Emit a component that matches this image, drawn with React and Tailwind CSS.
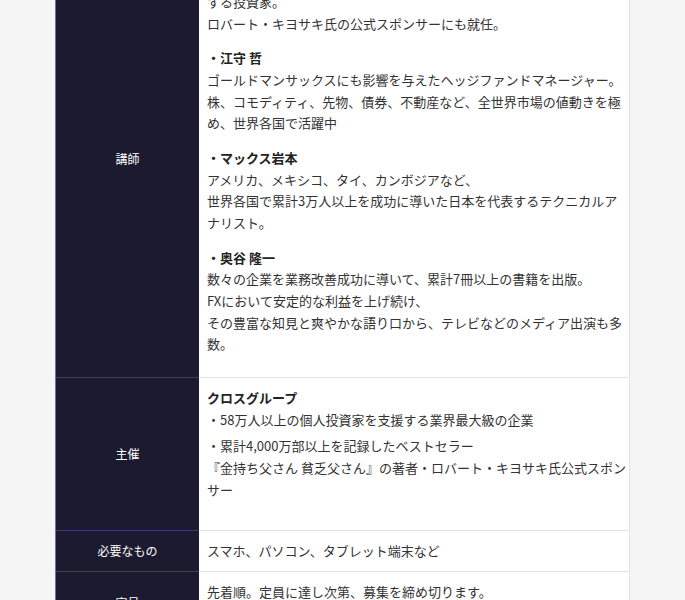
import React from 'react';

const Row = ({ label, children, bodyClass = '' }) => (
  <div className="flex">
    <div className="w-[143px] shrink-0 bg-[#1b1a2e] border-b border-[#3b3970] flex items-center justify-center text-[12px] text-white">
      {label}
    </div>
    <div className={`flex-1 min-w-0 bg-white border-b border-r border-[#e2e2e2] pl-[8px] pr-[5px] py-[9px] ${bodyClass}`}>
      {children}
    </div>
  </div>
);

// one explicit line of body text
const L = ({ children, bold }) => (
  <div className={`whitespace-nowrap ${bold ? 'font-bold text-[#222]' : ''}`}>{children}</div>
);

const App = () => {
  return (
    <div className="min-h-screen bg-[#f5f5f5] overflow-hidden font-['Noto_Sans_CJK_JP',sans-serif]">
      <div className="w-[575px] mx-auto -mt-[60px] border-l border-[#6f6cb0] text-[13px] leading-[21.67px] text-[#333]">
        <Row label="講師" bodyClass="pt-[51px]">
          <div className="mb-[13px]">
            <L>する投資家。</L>
            <L>ロバート・キヨサキ氏の公式スポンサーにも就任。</L>
          </div>
          <div className="mb-[13px]">
            <L bold>・江守 哲</L>
            <L>ゴールドマンサックスにも影響を与えたヘッジファンドマネージャー。</L>
            <L>株、コモディティ、先物、債券、不動産など、全世界市場の値動きを極</L>
            <L>め、世界各国で活躍中</L>
          </div>
          <div className="mb-[13px]">
            <L bold>・マックス岩本</L>
            <L>アメリカ、メキシコ、タイ、カンボジアなど、</L>
            <L>世界各国で累計3万人以上を成功に導いた日本を代表するテクニカルア</L>
            <L>ナリスト。</L>
          </div>
          <div className="mb-[13px]">
            <L bold>・奥谷 隆一</L>
            <L>数々の企業を業務改善成功に導いて、累計7冊以上の書籍を出版。</L>
            <L>FXにおいて安定的な利益を上げ続け、</L>
            <L>その豊富な知見と爽やかな語り口から、テレビなどのメディア出演も多</L>
            <L>数。</L>
          </div>
        </Row>

        <Row label="主催">
          <div className="mb-[5px]">
            <L bold>クロスグループ</L>
            <L>・58万人以上の個人投資家を支援する業界最大級の企業</L>
          </div>
          <div className="mb-[21px]">
            <L>・累計4,000万部以上を記録したベストセラー</L>
            <L>『金持ち父さん 貧乏父さん』の著者・ロバート・キヨサキ氏公式スポン</L>
            <L>サー</L>
          </div>
        </Row>

        <Row label="必要なもの">
          <L>スマホ、パソコン、タブレット端末など</L>
        </Row>

        <Row label="定員" bodyClass="pb-[31px]">
          <L>先着順。定員に達し次第、募集を締め切ります。</L>
        </Row>
      </div>
    </div>
  );
};

export default App;
